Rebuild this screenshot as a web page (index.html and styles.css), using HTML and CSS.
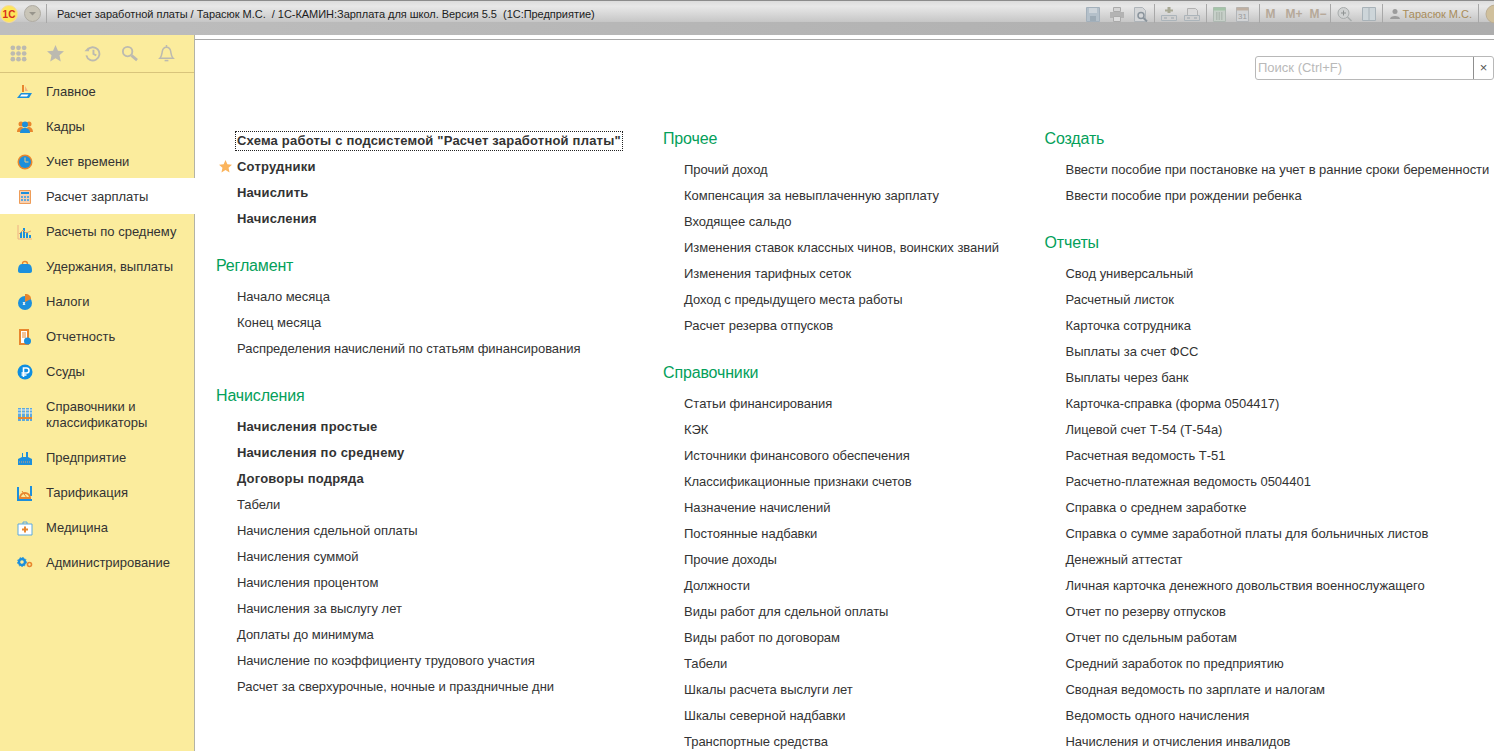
FILE: index.html
```html
<!DOCTYPE html>
<html lang="ru">
<head>
    <meta charset="UTF-8">
    <title>Расчет заработной платы</title>
    <link rel="stylesheet" href="styles.css">
</head>
<body>
    <header class="titlebar">
        <div class="titlebar-left">
            <svg class="logo" width="18" height="18" viewBox="0 0 18 18"><circle cx="9" cy="9" r="8.500" fill="#fde65a" stroke="#f4d9a0"/><text x="9" y="13" class="logo-text" text-anchor="middle">1С</text></svg>
            <svg class="menu-btn" width="17" height="17" viewBox="0 0 17 17"><circle cx="8.500" cy="8.500" r="8" fill="#c9c5b8" stroke="#aeaba2"/><path d="M5 7h7l-3.500 3.500z" fill="#98958c"/></svg>
            <span class="vsep"></span>
            <span class="app-title">Расчет заработной платы / Тарасюк М.С.&nbsp; / 1С-КАМИН:Зарплата для школ. Версия 5.5&nbsp; (1С:Предприятие)</span>
        </div>
        <div class="tools">
            <svg width="14" height="16" viewBox="0 0 14 16"><path d="M.5 1.500h13v14H.5z" fill="#b4c0ca" stroke="#a3b0bb"/><path d="M3 2h8v5H3z" fill="#cdd4da"/><path d="M4 10h6v5H4z" fill="#9dabb6"/></svg>
            <svg class="gap-l" width="14" height="16" viewBox="0 0 14 16"><path d="M3.500 1.500h7v4h-7z" fill="#d4d4d4" stroke="#aaa"/><path d="M0 6h14v6H0z" fill="#b3b3b3"/><path d="M3.500 10.500h7v5h-7z" fill="#dcdcdc" stroke="#aaa"/></svg>
            <svg class="gap-l" width="14" height="16" viewBox="0 0 14 16"><path d="M.5 1.500h8l3 3v11H.5z" fill="#d4d6d8" stroke="#aeb4b9"/><circle cx="7" cy="9.500" r="3" fill="none" stroke="#8a949c" stroke-width="1.500"/><path d="M9.500 12l3.500 3.500" stroke="#8a949c" stroke-width="2"/></svg>
            <span class="vsep tool-sep"></span>
            <svg width="16" height="16" viewBox="0 0 16 16"><path d="M.5 9.500h15v5H.5z" fill="#d0d0d0" stroke="#abb4ba"/><path d="M8 1v6" stroke="#a8a894" stroke-width="3"/><path d="M4 4.500h8" stroke="#a8a894" stroke-width="2"/><path d="M3 12h3M10 12h3" stroke="#9aa4ab"/></svg>
            <svg width="16" height="16" viewBox="0 0 16 16"><path d="M3.500 2.500h8l2 2v5h-10z" fill="#dadada" stroke="#b2b2b2"/><path d="M.5 9.500h15v5H.5z" fill="#d0d0d0" stroke="#abb4ba"/><path d="M3 12h3M10 12h3" stroke="#9aa4ab"/></svg>
            <span class="vsep tool-sep"></span>
            <svg width="13" height="16" viewBox="0 0 13 16"><path d="M.5 1.500h12v14H.5z" fill="#c6cfc8" stroke="#aeb8b2"/><path d="M.5 1.500h12v3H.5z" fill="#a5c4a9"/><path d="M3 7h7M3 9h7M3 11h7M3 13h7" stroke="#9aa49c" stroke-dasharray="1.500 1"/></svg>
            <svg class="gap-l" width="13" height="16" viewBox="0 0 13 16"><path d="M.5 1.500h12v14H.5z" fill="#d2d4d6" stroke="#b2b5b8"/><path d="M.5 1.500h12v3H.5z" fill="#bfb0a2"/><text x="6.500" y="13" class="cal-text" text-anchor="middle">31</text></svg>
            <span class="vsep tool-sep mem-sep"></span>
            <span class="mem">M</span>
            <span class="mem gap-l">M+</span>
            <span class="mem mem-last">M−</span>
            <span class="vsep tool-sep"></span>
            <svg width="15" height="16" viewBox="0 0 15 16"><circle cx="6.500" cy="7" r="5.500" fill="#d0d2d2" stroke="#a8acac"/><path d="M4 7h5M6.500 4.500v5" stroke="#8e9292"/><path d="M10.500 11l4 4" stroke="#a8acac" stroke-width="1.500"/></svg>
            <svg class="gap-l" width="14" height="14" viewBox="0 0 14 14"><path d="M.5.500h13v13H.5z" fill="#cdd5d9" stroke="#a8b2b8"/><path d="M7 .5v13" stroke="#a8b2b8"/></svg>
            <span class="vsep tool-sep"></span>
            <svg class="person" width="10" height="12" viewBox="0 0 10 12"><circle cx="5" cy="3.500" r="2.500" fill="#9c9c9c"/><path d="M0 11c0-4 10-4 10 0z" fill="#9c9c9c"/></svg>
            <span class="user">Тарасюк М.С.</span>
            <span class="vsep tool-sep"></span>
            <svg class="info" width="9" height="20" viewBox="0 0 9 20"><circle cx="10" cy="10" r="9" fill="#d0c09c" stroke="#bcae94"/></svg>
        </div>
    </header>
    <div class="tabstrip"></div>

    <div class="workspace">
        <nav class="sidebar">
            <div class="side-tools">
                <svg width="17" height="17" viewBox="0 0 18 18" fill="#bcbab0"><circle cx="3" cy="3" r="2.500"/><circle cx="9" cy="3" r="2.500"/><circle cx="15" cy="3" r="2.500"/><circle cx="3" cy="9" r="2.500"/><circle cx="9" cy="9" r="2.500"/><circle cx="15" cy="9" r="2.500"/><circle cx="3" cy="15" r="2.500"/><circle cx="9" cy="15" r="2.500"/><circle cx="15" cy="15" r="2.500"/></svg>
                <svg width="17" height="17" viewBox="0 0 18 18"><path d="M9 0l2.600 6 6.400.6-4.800 4.300 1.400 6.500L9 14l-5.600 3.400 1.400-6.500L0 6.600 6.400 6z" fill="#bcbab0"/></svg>
                <svg width="17" height="17" viewBox="0 0 18 18" fill="none" stroke="#bcbab0" stroke-width="2"><path d="M3.500 5.500A7 7 0 1 1 2.500 11"/><path d="M10 5v4.500l3 1.500"/><path d="M0.500 6.500h5l-1-4z" fill="#bcbab0" stroke="none"/></svg>
                <svg width="17" height="17" viewBox="0 0 18 18" fill="none" stroke="#bcbab0"><circle cx="7" cy="7" r="5" stroke-width="2"/><path d="M11 11l6 5" stroke-width="3"/></svg>
                <svg width="17" height="17" viewBox="0 0 18 18" fill="none" stroke="#bcbab0" stroke-width="1.600"><path d="M2 14c2-2 2-4 2.500-7C5 4 7 2.500 9 2.500S13 4 13.500 7c.5 3 .5 5 2.500 7z"/><path d="M7 16.500h4"/><path d="M9 0v2"/></svg>
            </div>
            <ul class="sections">
                <li class="section"><svg class="ico" width="16" height="16" viewBox="0 0 16 16"><path d="M5 1h2v7H5z" fill="#e8862e"/><path d="M8 2l3 5H8z" fill="#f2b482"/><path d="M4 9h11l-3 5H0z" fill="#1c8fdc"/><path d="M4.500 10.500h7L10 12.500H3z" fill="#fff"/></svg>Главное</li>
                <li class="section"><svg class="ico" width="16" height="16" viewBox="0 0 16 16"><circle cx="4" cy="5" r="2.500" fill="#e8862e"/><circle cx="12" cy="5" r="2.500" fill="#e8862e"/><path d="M0 13c0-4 3-5 4-5s4 1 4 5zM8 13c0-4 3-5 4-5s4 1 4 5z" fill="#e8862e"/><circle cx="8" cy="5.500" r="3" fill="#1c8fdc"/><path d="M3 14c0-4 3-5 5-5s5 1 5 5z" fill="#1c8fdc"/></svg>Кадры</li>
                <li class="section"><svg class="ico" width="16" height="16" viewBox="0 0 16 16"><circle cx="8" cy="8" r="7.500" fill="#e8862e"/><circle cx="8" cy="8" r="6" fill="#1c8fdc"/><path d="M8 3.500V8h3.500" stroke="#f3c77d" fill="none"/></svg>Учет времени</li>
                <li class="section current"><svg class="ico" width="16" height="16" viewBox="0 0 16 16"><path d="M2.500 1.500h11v13h-11z" fill="#f8d0b0" stroke="#ee9c58"/><path d="M4 3h8v2H4z" fill="#1c8fdc"/><path d="M4 7h2v2H4zM7 7h2v2H7zM10 7h2v2h-2zM4 10h2v2H4zM7 10h2v2H7zM10 10h2v2h-2z" fill="#5ca9de"/></svg>Расчет зарплаты</li>
                <li class="section"><svg class="ico" width="16" height="16" viewBox="0 0 16 16"><path d="M1 1v14h14" fill="none" stroke="#eeb285"/><path d="M3 14V8h2v6zM6 14V4h2v10zM9 14V8h2v6zM12 14v-3h2v3z" fill="#1c8fdc"/><path d="M2 10l4-4 3 3 5-2" fill="none" stroke="#e8a065"/></svg>Расчеты по среднему</li>
                <li class="section"><svg class="ico" width="16" height="16" viewBox="0 0 16 16"><path d="M1 12c0-4 1-7 4-7h6c3 0 4 3 4 7 0 1-1 2-2 2H3c-1 0-2-1-2-2z" fill="#1c8fdc"/><path d="M5.500 5c0-2 1-2.500 2.500-2.500s2.500.5 2.500 2.500" fill="none" stroke="#e8862e" stroke-width="1.400"/></svg>Удержания, выплаты</li>
                <li class="section"><svg class="ico" width="16" height="16" viewBox="0 0 16 16"><circle cx="8" cy="9" r="7" fill="#1c8fdc"/><path d="M8 8V0c4 0 6 2 6 5z" fill="#e8862e"/><path d="M6 8l2 3M8 8l-2 3" stroke="#fff"/></svg>Налоги</li>
                <li class="section"><svg class="ico" width="16" height="16" viewBox="0 0 16 16"><path d="M2 0h10v16H2z" fill="#e8862e"/><path d="M4 2h6v12H4z" fill="#fff"/><path d="M5 4h4M5 6h4M5 8h4" stroke="#e8862e"/><circle cx="10.500" cy="12" r="3.500" fill="#1c8fdc"/></svg>Отчетность</li>
                <li class="section"><svg class="ico" width="16" height="16" viewBox="0 0 16 16"><circle cx="8" cy="8" r="7.500" fill="#0f8ee0"/><path d="M6.500 13V4h3a2.500 2.500 0 0 1 0 5h-5M4.500 11h5" fill="none" stroke="#fff" stroke-width="1.600"/></svg>Ссуды</li>
                <li class="section two-line"><svg class="ico" width="16" height="16" viewBox="0 0 16 16"><path d="M1 1h3v13H1zM5 1h3v13H5zM9 1h3v13H9zM13 1h2v13h-2z" fill="#5ca9de"/><path d="M1 3h14M1 6h14" stroke="#e8eef2"/><path d="M1 11h14" stroke="#e8862e" stroke-width="2"/></svg><span>Справочники и<br>классификаторы</span></li>
                <li class="section"><svg class="ico" width="16" height="16" viewBox="0 0 16 16"><path d="M1 15V9l4-2V3h1v4h3V2h2v5l4 2v6z" fill="#1c8fdc"/><path d="M2 12h12" stroke="#e8a065" stroke-dasharray="1 1"/></svg>Предприятие</li>
                <li class="section"><svg class="ico" width="16" height="16" viewBox="0 0 16 16"><path d="M1 2v13h14" fill="none" stroke="#1c8fdc" stroke-width="2"/><path d="M14 1v10" stroke="#1c8fdc" stroke-width="2"/><path d="M3 13a5 5 0 0 1 10 0z" fill="none" stroke="#e8862e" stroke-width="2"/><path d="M5 6l5 7" stroke="#e8862e"/></svg>Тарификация</li>
                <li class="section"><svg class="ico" width="16" height="16" viewBox="0 0 16 16"><path d="M1 4h14v11H1z" fill="#fff" stroke="#5ca9de"/><path d="M6 4V2h4v2" fill="none" stroke="#5ca9de"/><path d="M8 6.500v6M5 9.500h6" stroke="#e8862e" stroke-width="2"/></svg>Медицина</li>
                <li class="section"><svg class="ico" width="16" height="16" viewBox="0 0 16 16"><circle cx="5" cy="7" r="3" fill="none" stroke="#1c8fdc" stroke-width="2.400"/><circle cx="5" cy="7" r="4.500" fill="none" stroke="#1c8fdc" stroke-dasharray="1.500 1.500"/><circle cx="12.500" cy="9.500" r="2" fill="none" stroke="#e8862e" stroke-width="1.600"/></svg>Администрирование</li>
            </ul>
        </nav>

        <main class="content">
            <div class="search-row">
                <div class="search"><span class="search-input">Поиск (Ctrl+F)</span><span class="search-clear">×</span></div>
            </div>
            <div class="columns">
                <div class="col col-1">
                    <ul class="links">
                        <li class="strong focused"><span>Схема работы с подсистемой "Расчет заработной платы"</span></li>
                        <li class="strong starred"><svg class="star" width="13" height="13" viewBox="0 0 18 18"><path d="M9 0l2.600 6 6.400.6-4.800 4.300 1.400 6.300L9 13.900l-5.600 3.300 1.400-6.300L0 6.600 6.400 6z" fill="#fbb45c"/></svg>Сотрудники</li>
                        <li class="strong">Начислить</li>
                        <li class="strong">Начисления</li>
                    </ul>
                    <h2>Регламент</h2>
                    <ul class="links">
                        <li>Начало месяца</li>
                        <li>Конец месяца</li>
                        <li>Распределения начислений по статьям финансирования</li>
                    </ul>
                    <h2>Начисления</h2>
                    <ul class="links">
                        <li class="strong">Начисления простые</li>
                        <li class="strong">Начисления по среднему</li>
                        <li class="strong">Договоры подряда</li>
                        <li>Табели</li>
                        <li>Начисления сдельной оплаты</li>
                        <li>Начисления суммой</li>
                        <li>Начисления процентом</li>
                        <li>Начисления за выслугу лет</li>
                        <li>Доплаты до минимума</li>
                        <li>Начисление по коэффициенту трудового участия</li>
                        <li>Расчет за сверхурочные, ночные и праздничные дни</li>
                    </ul>
                </div>
                <div class="col col-2">
                    <h2 class="first">Прочее</h2>
                    <ul class="links">
                        <li>Прочий доход</li>
                        <li>Компенсация за невыплаченную зарплату</li>
                        <li>Входящее сальдо</li>
                        <li>Изменения ставок классных чинов, воинских званий</li>
                        <li>Изменения тарифных сеток</li>
                        <li>Доход с предыдущего места работы</li>
                        <li>Расчет резерва отпусков</li>
                    </ul>
                    <h2>Справочники</h2>
                    <ul class="links">
                        <li>Статьи финансирования</li>
                        <li>КЭК</li>
                        <li>Источники финансового обеспечения</li>
                        <li>Классификационные признаки счетов</li>
                        <li>Назначение начислений</li>
                        <li>Постоянные надбавки</li>
                        <li>Прочие доходы</li>
                        <li>Должности</li>
                        <li>Виды работ для сдельной оплаты</li>
                        <li>Виды работ по договорам</li>
                        <li>Табели</li>
                        <li>Шкалы расчета выслуги лет</li>
                        <li>Шкалы северной надбавки</li>
                        <li>Транспортные средства</li>
                    </ul>
                </div>
                <div class="col col-3">
                    <h2 class="first">Создать</h2>
                    <ul class="links">
                        <li>Ввести пособие при постановке на учет в ранние сроки беременности</li>
                        <li>Ввести пособие при рождении ребенка</li>
                    </ul>
                    <h2>Отчеты</h2>
                    <ul class="links">
                        <li>Свод универсальный</li>
                        <li>Расчетный листок</li>
                        <li>Карточка сотрудника</li>
                        <li>Выплаты за счет ФСС</li>
                        <li>Выплаты через банк</li>
                        <li>Карточка-справка (форма 0504417)</li>
                        <li>Лицевой счет Т-54 (Т-54а)</li>
                        <li>Расчетная ведомость Т-51</li>
                        <li>Расчетно-платежная ведомость 0504401</li>
                        <li>Справка о среднем заработке</li>
                        <li>Справка о сумме заработной платы для больничных листов</li>
                        <li>Денежный аттестат</li>
                        <li>Личная карточка денежного довольствия военнослужащего</li>
                        <li>Отчет по резерву отпусков</li>
                        <li>Отчет по сдельным работам</li>
                        <li>Средний заработок по предприятию</li>
                        <li>Сводная ведомость по зарплате и налогам</li>
                        <li>Ведомость одного начисления</li>
                        <li>Начисления и отчисления инвалидов</li>
                    </ul>
                </div>
            </div>
        </main>
    </div>
</body>
</html>
```

FILE: styles.css
```css
* {
    box-sizing: border-box;
}
html, body {
    height: 100%;
}
body {
    margin: 0;
    overflow: hidden;
    font-family: "Liberation Sans", Arial, sans-serif;
    font-size: 13px;
    color: #333;
    background: #fff;
}
ul {
    list-style: none;
    margin: 0;
    padding: 0;
}

/* title bar */
.titlebar {
    height: 22px;
    padding-top: 4px;
    display: flex;
    justify-content: space-between;
    align-items: center;
    background: linear-gradient(#dcdcdc, #e8e8e8 25%, #c6c6c6);
    border-top: 1px solid #8c8c8c;
}
.titlebar-left {
    display: flex;
    align-items: center;
}
.logo-text {
    font-size: 10px;
    font-weight: bold;
    fill: #d8301c;
}
.menu-btn {
    margin-left: 6px;
}
.vsep {
    flex: none;
    width: 1px;
    height: 19px;
    background: #a8a8a8;
}
.titlebar-left .vsep {
    margin-left: 5px;
}
.app-title {
    margin-left: 10px;
    font-size: 11px;
    letter-spacing: -.03px;
    color: #1c1c1c;
}
.tools {
    display: flex;
    align-items: center;
    gap: 7px;
}
.tools svg {
    flex: none;
    display: block;
}
.gap-l {
    margin-left: 3px;
}
.tool-sep {
    margin: 0 -1px;
}
.tool-sep.mem-sep {
    margin-left: 3px;
}
.cal-text {
    font-size: 8px;
    fill: #9a9a9a;
}
.mem {
    font-size: 12px;
    font-weight: bold;
    color: #b6a999;
}
.mem-last {
    margin-right: -3px;
}
.person {
    margin-left: 1px;
}
.user {
    margin-left: -4px;
    font-size: 11px;
    color: #a88c5a;
}
.tabstrip {
    height: 13px;
    background: linear-gradient(90deg, #bebebe, #adadad);
}

/* left panel */
.workspace {
    display: flex;
    height: calc(100% - 35px);
}
.sidebar {
    width: 195px;
    flex: none;
    background: #fbec9d;
    border-right: 1px solid #b3b3a5;
}
.side-tools {
    height: 38px;
    padding-left: 10px;
    display: flex;
    align-items: center;
    gap: 20px;
    border-bottom: 1px solid #d8c47c;
}
.sections {
    padding-top: 1px;
}
.section {
    height: 35px;
    padding-left: 17px;
    display: flex;
    align-items: center;
    gap: 13px;
    color: #333;
}
.section.current {
    background: #fff;
    margin-right: -1px;
    box-shadow: 0 -1px #fff;
}
.section.two-line {
    height: 51px;
    line-height: 16px;
}
.ico {
    flex: none;
}

/* main area */
.content {
    flex: 1;
    min-width: 0;
    border-top: 1px solid #a9a9a9;
    margin-top: 4px;
    overflow: hidden;
}
.search-row {
    display: flex;
    justify-content: flex-end;
    padding-top: 16px;
}
.search {
    width: 239px;
    height: 24px;
    display: flex;
    border: 1px solid #b8b8b8;
    border-radius: 3px;
}
.search-input {
    flex: 1;
    padding: 3px 2px;
    line-height: 16px;
    color: #b9b9b9;
}
.search-clear {
    width: 20px;
    border-left: 1px solid #8f8f8f;
    text-align: center;
    line-height: 21px;
    color: #555;
}
.columns {
    display: flex;
    padding-top: 47px;
}
.col-1 {
    width: 468px;
    flex: none;
    padding-top: 1px;
}
.col-2 {
    width: 381.500px;
    flex: none;
}
.col-3 {
    flex: 1;
    white-space: nowrap;
}
h2 {
    margin: 22px 0 0 21px;
    font-size: 16px;
    font-weight: normal;
    line-height: 24px;
    letter-spacing: -.15px;
    color: #04a05a;
}
.col-2 h2, .col-3 h2 {
    margin-left: 0;
}
h2.first {
    margin-top: 0;
}
.links {
    padding-top: 6px;
}
.links li {
    position: relative;
    height: 26px;
    line-height: 26px;
    padding-left: 21px;
    white-space: nowrap;
    letter-spacing: -.03px;
}
.col-1 .links li {
    padding-left: 42px;
}
.col-1 > .links:first-child {
    padding-top: 0;
}
.links li.strong {
    font-weight: bold;
    letter-spacing: .2px;
}
.focused span {
    display: inline-block;
    line-height: 16px;
    outline: 1px dotted #222;
    outline-offset: 1px;
}
.star {
    position: absolute;
    left: 24px;
    top: 6px;
}
```
